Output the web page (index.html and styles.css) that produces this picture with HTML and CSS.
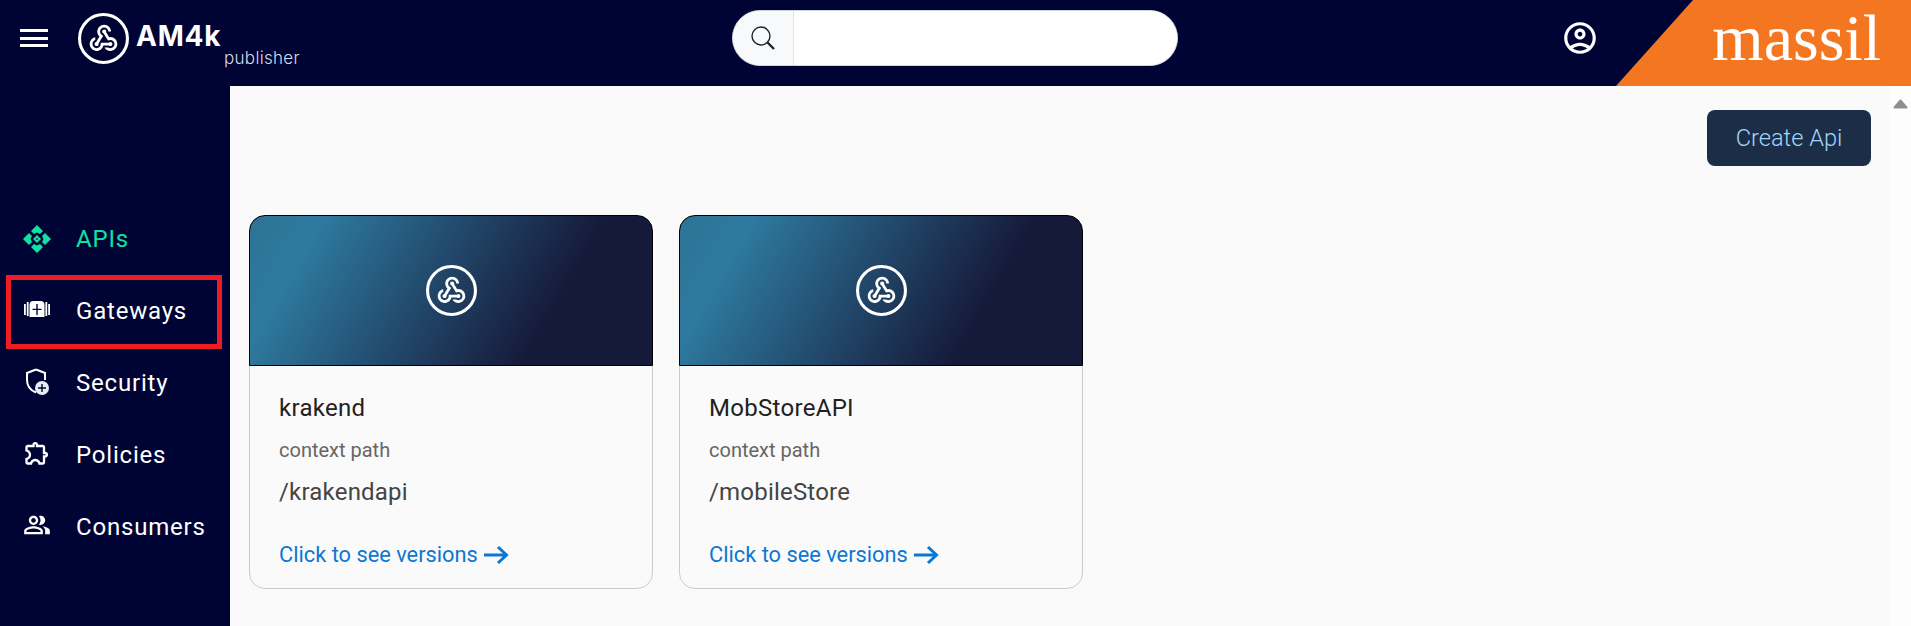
FILE: index.html

```html
<!DOCTYPE html>
<html lang="en">
<head>
  <meta charset="UTF-8" />
  <meta name="viewport" content="width=device-width, initial-scale=1.0"/>
  <title>AM4k publisher</title>
  <link rel="stylesheet" href="styles.css">
</head>
<body>
  <svg class="defs" width="0" height="0">
    <symbol id="hook" viewBox="0 0 50 50">
      <circle cx="25" cy="25" r="23.5" fill="none" stroke="currentColor" stroke-width="3"/>
      <g transform="translate(8.8 8.8) scale(1.35)" fill="currentColor">
        <path d="M10 15h5.88c.27-.31.67-.5 1.12-.5.83 0 1.5.67 1.5 1.5s-.67 1.5-1.5 1.5c-.44 0-.84-.19-1.12-.5H11.9c-.46 2.28-2.48 4-4.9 4-2.76 0-5-2.24-5-5 0-2.42 1.72-4.44 4-4.9v2.07c-1.16.41-2 1.53-2 2.83 0 1.65 1.35 3 3 3s3-1.35 3-3v-1zm2.5-11c1.65 0 3 1.35 3 3h2c0-2.76-2.24-5-5-5s-5 2.24-5 5c0 1.43.6 2.71 1.55 3.62l-2.35 3.9c-.68.14-1.2.75-1.2 1.48 0 .83.67 1.5 1.5 1.5s1.5-.67 1.5-1.5c0-.16-.02-.31-.07-.45l3.38-5.63C10.49 9.61 9.5 8.42 9.5 7c0-1.65 1.35-3 3-3zm4.5 9c-.64 0-1.23.2-1.72.54l-3.05-5.07C11.53 8.35 11 7.74 11 7c0-.83.67-1.5 1.5-1.5S14 6.17 14 7c0 .15-.02.29-.06.43l2.19 3.65c.28-.05.57-.08.87-.08 2.76 0 5 2.24 5 5s-2.24 5-5 5c-1.85 0-3.47-1.01-4.33-2.5h2.67c.48.32 1.05.5 1.66.5 1.65 0 3-1.35 3-3s-1.35-3-3-3z"/>
      </g>
    </symbol>
  </svg>

  <header class="topbar">
    <div class="brand">
      <button class="burger" aria-label="menu"><span></span><span></span><span></span></button>
      <svg class="brand-logo"><use href="#hook"/></svg>
      <div class="brand-name">AM4k</div>
      <div class="brand-sub">publisher</div>
    </div>
    <div class="search">
      <span class="search-addon">
        <svg width="24" height="24" viewBox="0 0 24 24" fill="none" stroke="#212529">
          <circle cx="10" cy="10" r="9" stroke-width="1.4"/>
          <path d="M16.5 16.5l6.5 6.5" stroke-width="2.4"/>
        </svg>
      </span>
      <input class="search-input" type="text">
    </div>
    <div class="user">
      <svg width="38" height="38" viewBox="0 0 24 24" fill="#fff">
        <path d="M12 2C6.48 2 2 6.48 2 12s4.48 10 10 10 10-4.48 10-10S17.52 2 12 2zM7.35 18.5C8.66 17.56 10.26 17 12 17s3.34.56 4.65 1.5C15.34 19.44 13.74 20 12 20s-3.34-.56-4.65-1.5zm10.79-1.38C16.45 15.8 14.32 15 12 15s-4.45.8-6.14 2.12C4.7 15.73 4 13.95 4 12c0-4.42 3.58-8 8-8s8 3.58 8 8c0 1.95-.7 3.73-1.86 5.12zM12 6c-1.93 0-3.5 1.57-3.5 3.5S10.07 13 12 13s3.5-1.57 3.5-3.5S13.93 6 12 6zm0 5c-.83 0-1.5-.67-1.5-1.5S11.17 8 12 8s1.5.67 1.5 1.5S12.83 11 12 11z"/>
      </svg>
    </div>
    <div class="tenant">massil</div>
  </header>

  <div class="layout">
    <nav class="sidebar">
      <a class="nav-item active">
        <span class="nav-icon">
          <svg width="28" height="28" viewBox="0 0 28 28" fill="currentColor">
            <polygon points="14,0 20,6 17,9 14,7.5 11,9 8,6"/>
            <polygon points="14,0 20,6 17,9 14,7.5 11,9 8,6" transform="rotate(90 14 14)"/>
            <polygon points="14,0 20,6 17,9 14,7.5 11,9 8,6" transform="rotate(180 14 14)"/>
            <polygon points="14,0 20,6 17,9 14,7.5 11,9 8,6" transform="rotate(270 14 14)"/>
            <path fill-rule="evenodd" d="M14 10l4 4-4 4-4-4zM14 13l-1 1 1 1 1-1z"/>
          </svg>
        </span>
        APIs
      </a>
      <a class="nav-item nav-item-marked">
        <span class="nav-icon nav-icon-up">
          <svg width="26" height="17" viewBox="0 0 26 17" fill="#fff">
            <rect x="0" y="3" width="1.8" height="11"/>
            <rect x="2.8" y="1" width="1.8" height="14"/>
            <rect x="21.4" y="1" width="1.8" height="14"/>
            <rect x="24.2" y="3" width="1.8" height="11"/>
            <path fill-rule="evenodd" d="M5.5 16V4q0-4 4-4h7q4 0 4 4v12zM12.300 3v4.700H8.500v1.400h3.800V14h1.400V9.100h3.800V7.700h-3.800V3z"/>
          </svg>
        </span>
        Gateways
      </a>
      <a class="nav-item">
        <span class="nav-icon nav-icon-up">
          <svg width="24" height="27" viewBox="0 0 24 27">
            <path d="M11 1.5L20 5v7M11 1.5L2 5v7c0 6 4 10.500 9 12.500" fill="none" stroke="#fff" stroke-width="2"/>
            <circle cx="17" cy="20" r="7" fill="#e8edf3"/>
            <path d="M17 16v8M13 20h8" stroke="#000434" stroke-width="1.400"/>
          </svg>
        </span>
        Security
      </a>
      <a class="nav-item">
        <span class="nav-icon nav-icon-up">
          <svg width="30" height="30" viewBox="0 0 24 24" fill="#fff">
            <path d="M10.500 4.500c.28 0 .5.22.5.5v2h6v6h2c.28 0 .5.22.5.5s-.22.5-.5.5h-2v6h-2.120c-.68-1.750-2.390-3-4.380-3s-3.700 1.250-4.380 3H4v-2.120c1.750-.68 3-2.390 3-4.380 0-1.990-1.240-3.700-2.990-4.380L4 7h6V5c0-.28.22-.5.5-.5m0-2C9.120 2.500 8 3.620 8 5H4c-1.100 0-1.990.9-1.990 2v3.800h.29c1.490 0 2.700 1.210 2.700 2.700s-1.210 2.700-2.700 2.700H2V20c0 1.100.9 2 2 2h3.800v-.3c0-1.490 1.210-2.700 2.700-2.700s2.700 1.210 2.700 2.700v.3H17c1.100 0 2-.9 2-2v-4c1.380 0 2.500-1.120 2.500-2.500S20.380 11 19 11V7c0-1.100-.9-2-2-2h-4c0-1.380-1.120-2.500-2.500-2.500z"/>
          </svg>
        </span>
        Policies
      </a>
      <a class="nav-item">
        <span class="nav-icon nav-icon-up">
          <svg width="30" height="30" viewBox="0 0 24 24" fill="#fff">
            <path d="M16.670 13.130C18.040 14.060 19 15.320 19 17v3h4v-3c0-2.180-3.570-3.470-6.330-3.870zM15 12c2.210 0 4-1.790 4-4s-1.790-4-4-4c-.47 0-.91.1-1.330.24C14.500 5.270 15 6.580 15 8s-.5 2.730-1.330 3.760c.42.14.86.24 1.330.24zM9 12c2.210 0 4-1.790 4-4s-1.790-4-4-4-4 1.790-4 4 1.790 4 4 4zm0-6c1.100 0 2 .9 2 2s-.9 2-2 2-2-.9-2-2 .9-2 2-2zM9 13c-2.670 0-8 1.340-8 4v3h16v-3c0-2.660-5.330-4-8-4zm6 5H3v-.99C3.200 16.290 6.300 15 9 15s5.800 1.290 6 2v1z"/>
          </svg>
        </span>
        Consumers
      </a>
    </nav>

    <main class="content">
      <div class="toolbar">
        <button class="btn-create">Create Api</button>
      </div>
      <div class="cards">
        <div class="card">
          <div class="card-top"><svg class="card-logo"><use href="#hook"/></svg></div>
          <div class="card-body">
            <div class="card-title">krakend</div>
            <div class="card-label">context path</div>
            <div class="card-path">/krakendapi</div>
            <a class="card-link">Click to see versions
              <svg width="25" height="20" viewBox="0 0 25 20" fill="none" stroke="currentColor" stroke-width="3"><path d="M0 10h22M14 2l8.500 8-8.500 8"/></svg>
            </a>
          </div>
        </div>
        <div class="card">
          <div class="card-top"><svg class="card-logo"><use href="#hook"/></svg></div>
          <div class="card-body">
            <div class="card-title">MobStoreAPI</div>
            <div class="card-label">context path</div>
            <div class="card-path">/mobileStore</div>
            <a class="card-link">Click to see versions
              <svg width="25" height="20" viewBox="0 0 25 20" fill="none" stroke="currentColor" stroke-width="3"><path d="M0 10h22M14 2l8.500 8-8.500 8"/></svg>
            </a>
          </div>
        </div>
      </div>
    </main>

    <div class="scrollbar">
      <svg class="scroll-up" width="15" height="10" viewBox="0 0 15 10" fill="#8f8f8f" stroke="#8f8f8f" stroke-width="2" stroke-linejoin="round"><path d="M7.500 1.500L13.500 8.500H1.500z"/></svg>
    </div>
  </div>
</body>
</html>
```

FILE: styles.css

```css
*, *::after { box-sizing: border-box; }
html, body { height: 100%; }
body { margin: 0; font-family: Roboto, Arial, sans-serif; background: #fafafa; overflow: hidden; }
.defs { display: block; height: 0; }

.topbar { height: 86px; background: #000434; display: grid; grid-template-columns: 732px 446px 1fr 295px; align-items: center; }
.brand { position: relative; height: 86px; display: flex; align-items: center; padding-left: 20px; }
.burger { width: 28px; height: 18px; padding: 0; margin-top: -10px; border: none; background: none; display: flex; flex-direction: column; justify-content: space-between; }
.burger span { display: block; height: 3px; background: #fff; }
.brand-logo { width: 51px; height: 51px; margin: -10px 0 0 30px; color: #fff; }
.brand-name { font-family: Inter, Arial, sans-serif; font-weight: 700; font-size: 28px; color: #fff; margin: -14px 0 0 7px; letter-spacing: .8px; }
.brand-sub { position: absolute; left: 224px; top: 48px; font-family: Inter, Arial, sans-serif; font-weight: 300; font-size: 17px; letter-spacing: .3px; color: #d9dbe6; }

.search { height: 56px; margin-top: -10px; display: flex; border-radius: 28px; overflow: hidden; background: #fff; border: 1px solid #ced4da; }
.search-addon { width: 61px; background: #f8f9fa; border-right: 1px solid #dee2e6; display: flex; align-items: center; justify-content: center; }
.search-input { flex: 1; border: none; outline: none; background: #fff; }

.user { display: flex; justify-content: flex-end; padding-right: 17px; margin-top: -10px; }
.tenant { height: 86px; background: #f57621; clip-path: polygon(77px 0, 100% 0, 100% 100%, 0 100%); font-family: "Liberation Serif", serif; font-size: 66px; line-height: 76px; color: #fff; text-align: right; padding-right: 30px; }

.layout { display: flex; height: calc(100vh - 86px); }
.sidebar { width: 230px; background: #000434; padding-top: 117px; flex-shrink: 0; }
.nav-item { height: 72px; display: flex; align-items: center; color: #fff; font-size: 24px; letter-spacing: .8px; position: relative; }
.nav-item.active { color: #10e0a4; }
.nav-icon { width: 76px; padding-left: 23px; display: flex; justify-content: center; padding-right: 25px; flex-shrink: 0; }
.nav-icon-up { margin-top: -4px; }
.nav-item-marked::after { content: ""; position: absolute; left: 6px; top: 0; width: 216px; height: 74px; border: 5px solid #ed1c24; }

.content { flex: 1; padding: 24px 18px 0 19px; }
.toolbar { display: flex; justify-content: flex-end; margin-bottom: 49px; }
.btn-create { width: 164px; height: 56px; background: #1c2e47; color: #a3d4fa; border: none; border-radius: 8px; font-family: Roboto, Arial, sans-serif; font-weight: 300; font-size: 23.6px; }

.cards { display: flex; gap: 26px; }
.card { width: 404px; height: 374px; border: 1px solid #ccc; border-radius: 16px; background: #fafafa; }
.card-top { height: 151px; margin: -1px -1px 0; border: 1px solid #000; border-radius: 16px 16px 0 0; background: linear-gradient(120deg, #2c7396 0%, #2e7a9f 15%, #161a3a 73%); display: flex; align-items: center; justify-content: center; }
.card-logo { width: 51px; height: 51px; color: #fff; }
.card-body { padding: 27px 28px 0 29px; }
.card-title { font-size: 24px; letter-spacing: .3px; line-height: 30px; color: #212121; }
.card-label { font-size: 20px; line-height: 26px; color: #666; margin-top: 14px; }
.card-path { font-size: 24px; letter-spacing: .2px; line-height: 30px; color: #444; margin-top: 14px; }
.card-link { display: flex; align-items: center; gap: 6px; font-size: 21.8px; line-height: 28px; color: #0a78d2; margin-top: 34px; }

.scrollbar { width: 22px; background: #fdfdfd; flex-shrink: 0; padding-top: 13px; }
.scroll-up { display: block; margin-left: 4px; }
```
